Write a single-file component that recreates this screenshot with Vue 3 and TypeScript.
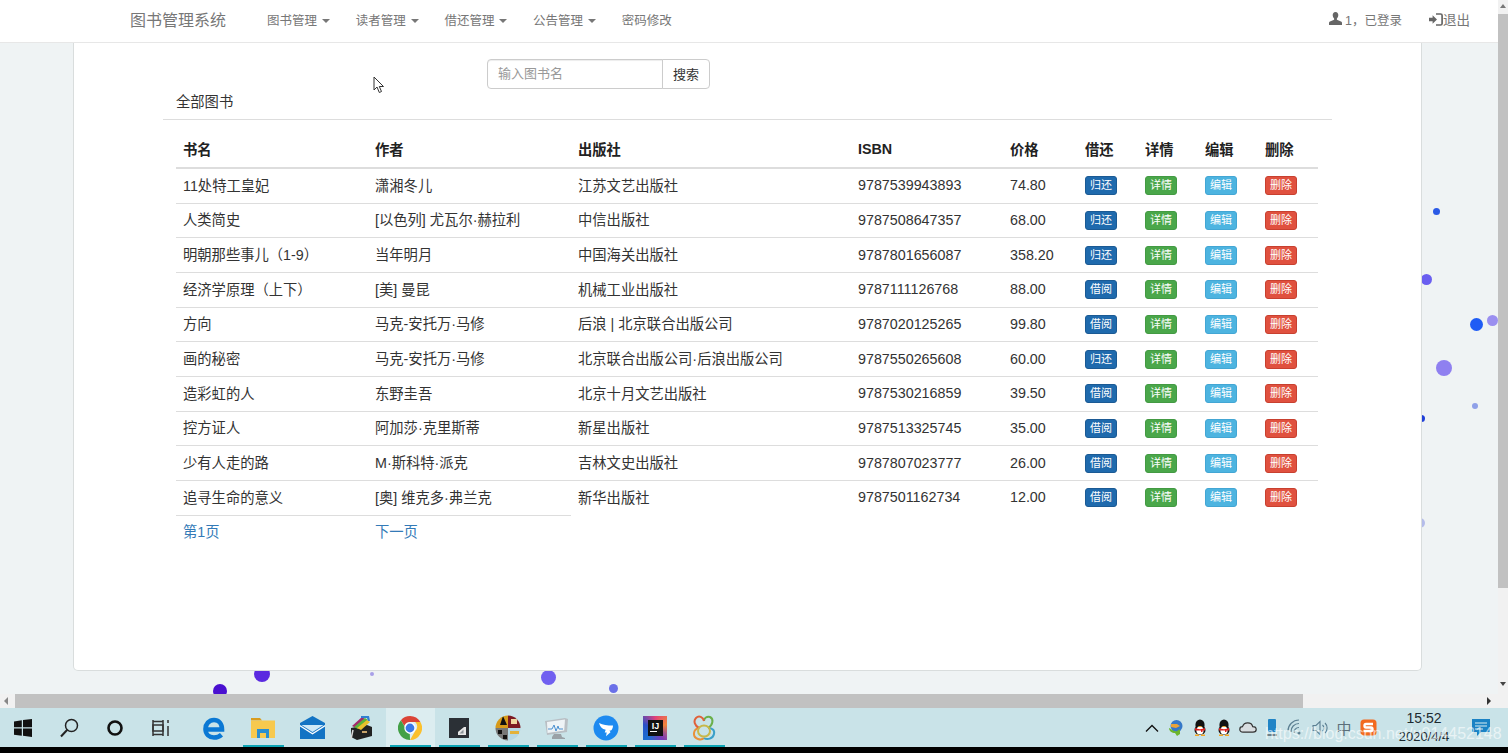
<template>
  <div class="screen">
    <div class="browser">
      <div class="viewport">
        <span
          v-for="(dot, i) in dots"
          :key="i"
          class="dot"
          :style="{ left: dot.x - dot.r + 'px', top: dot.y - dot.r + 'px', width: dot.r * 2 + 'px', height: dot.r * 2 + 'px', background: dot.c }"
        ></span>

        <header class="navbar">
          <a class="brand">图书管理系统</a>
          <ul class="nav">
            <li v-for="item in menus" :key="item">{{ item }}<i class="caret"></i></li>
            <li>密码修改</li>
          </ul>
          <div class="nav-right">
            <span class="nav-user">
              <svg width="13" height="13" viewBox="0 0 13 13"><path fill="#666" d="M6.500 0C4.600 0 3.700 1.400 3.700 3.100c0 1.400.6 2.700 1.400 3.400v1.200L1 9.400C.3 9.700 0 10.200 0 11v2h13v-2c0-.8-.3-1.300-1-1.600L7.900 7.700V6.500c.8-.7 1.400-2 1.400-3.400C9.300 1.400 8.400 0 6.500 0z"/></svg>
              1，已登录
            </span>
            <span class="nav-out">
              <svg width="14" height="13" viewBox="0 0 14 13"><path fill="#666" d="M0 4.800h3.600V2.300L8 6.500l-4.400 4.200V8.200H0z"/><path fill="none" stroke="#666" stroke-width="1.700" d="M7 1h4.500c1 0 1.600.6 1.600 1.600v7.800c0 1-.6 1.600-1.600 1.600H7"/></svg>
              退出
            </span>
          </div>
        </header>

        <main class="card">
          <form class="search" @submit.prevent>
            <input class="search-input" placeholder="输入图书名" />
            <button class="search-btn" type="button">搜索</button>
          </form>
          <div class="panel-title">全部图书</div>
          <table class="books">
            <colgroup>
              <col v-for="w in colWidths" :key="w.id" :style="{ width: w.px + 'px' }" />
            </colgroup>
            <thead>
              <tr>
                <th>书名</th><th>作者</th><th>出版社</th><th>ISBN</th><th>价格</th>
                <th>借还</th><th>详情</th><th>编辑</th><th>删除</th>
              </tr>
            </thead>
            <tbody>
              <tr v-for="b in books" :key="b.isbn">
                <td>{{ b.name }}</td>
                <td>{{ b.author }}</td>
                <td>{{ b.press }}</td>
                <td class="num">{{ b.isbn }}</td>
                <td class="num">{{ b.price }}</td>
                <td class="act"><button class="btn blue">{{ b.out ? '归还' : '借阅' }}</button></td>
                <td class="act"><button class="btn green">详情</button></td>
                <td class="act"><button class="btn teal">编辑</button></td>
                <td class="act"><button class="btn red">删除</button></td>
              </tr>
              <tr class="pager">
                <td><a>第1页</a></td>
                <td><a>下一页</a></td>
              </tr>
            </tbody>
          </table>
        </main>

        <svg class="cursor" width="12" height="18" viewBox="0 0 12 18"><path fill="#fff" stroke="#333" stroke-width="1" d="M1 1v13l3-3 2.300 5.500 2.200-1L6.300 10.500H10.500z"/></svg>
      </div>

      <div class="vscroll">
        <span class="arrow-up"></span>
        <div class="vthumb"></div>
        <span class="arrow-down"></span>
      </div>
    </div>

    <div class="hscroll">
      <span class="arrow-left"></span>
      <div class="hthumb"></div>
      <span class="arrow-right"></span>
    </div>

    <footer class="taskbar">
      <div class="cells-start">
        <div class="cell small">
          <svg width="22" height="22" viewBox="0 0 22 22"><path fill="#111" d="M2 4.500 9.800 3.300v7H2zM11 3.100 20 2v8.300h-9zM2 11.600h7.800v7.200L2 17.700zM11 11.600h9V20l-9-1.200z"/></svg>
        </div>
        <div class="cell small">
          <svg width="22" height="22" viewBox="0 0 22 22"><circle cx="13.500" cy="8.500" r="6" fill="none" stroke="#222" stroke-width="1.500"/><path stroke="#222" stroke-width="2" d="M9.300 12.800 3 19.500"/></svg>
        </div>
        <div class="cell small">
          <svg width="20" height="20" viewBox="0 0 20 20"><circle cx="10" cy="10" r="6.500" fill="none" stroke="#111" stroke-width="2.600"/></svg>
        </div>
        <div class="cell small">
          <svg width="20" height="18" viewBox="0 0 20 18"><g fill="none" stroke="#333" stroke-width="1.500"><path d="M2 1v16M12 1v16M2 2.500h10M2 15.500h10"/><rect x="2" y="6" width="10" height="6"/><path d="M17 1v3M17 7v10"/></g></svg>
        </div>
      </div>
      <div class="cells-apps">
        <div class="cell">
          <svg width="24" height="24" viewBox="0 0 24 24"><path fill="none" stroke="#0a78d4" stroke-width="4.600" d="M4 13.500h16C20 7.500 16.500 4 12 4 7 4 3.500 8 3.500 13c0 5.500 4 8.500 8.500 8.500 3 0 5.500-1 7.500-2.800"/></svg>
        </div>
        <div class="cell on">
          <svg width="24" height="22" viewBox="0 0 24 22"><path fill="#d99c1e" d="M0 1h9l2 2.500H0z"/><path fill="#f7c94e" d="M0 3.500h24V21H0z"/><path fill="#2a8fd0" d="M6 12h12v9h-3v-5H9v5H6z"/></svg>
        </div>
        <div class="cell">
          <svg width="25" height="23" viewBox="0 0 25 23"><path fill="#1273c4" d="M0 7 12.500 0 25 7v16H0z"/><path fill="#cfe9f7" d="M1.500 9h22L12.500 16z"/><path fill="#fff" d="M0 9l12.500 8L25 9v1.500L12.500 18.500 0 10.500z"/></svg>
        </div>
        <div class="cell">
          <svg width="24" height="26" viewBox="0 0 24 26"><path fill="#222" d="M2 13 18 10l5 2v9L8 25l-6-3z"/><path fill="#a52a6a" d="m3 11 10-9 3 2-9 9z"/><path fill="#5cb23a" d="m5 12 11-9 3 2-10 9z"/><path fill="#e8c02c" d="m8 13 10-8 3 2-9 8z"/><path fill="#2f7fd2" d="M12 1h8l1 5h-2l-1-3h-6z"/><path stroke="#ddd" stroke-width="1.500" d="M4 15 2 24"/><rect x="13" y="16" width="5" height="2" fill="#c9a36a"/></svg>
        </div>
        <div class="cell on active">
          <svg width="24" height="24" viewBox="0 0 24 24"><path fill="#db4437" d="M12 0a12 12 0 0 1 10.400 6H12a6 6 0 0 0-5.700 4L2.900 4.200A12 12 0 0 1 12 0z"/><path fill="#fbc02d" d="M22.400 6A12 12 0 0 1 12 24l5.200-9a6 6 0 0 0 0-9z"/><path fill="#43a047" d="M2.900 4.200 8 13a5.900 5.900 0 0 0 4 5l-.2.100L12 24A12 12 0 0 1 2.900 4.200z"/><circle cx="12" cy="12" r="5.700" fill="#fff"/><circle cx="12" cy="12" r="4.400" fill="#3b78e7"/></svg>
        </div>
        <div class="cell on">
          <svg width="20" height="20" viewBox="0 0 20 20"><rect width="20" height="20" fill="#2b3036"/><path fill="#e6e6e6" d="M9 17V14h-.1L15 9h2v8z"/><path fill="#8d9399" d="m10.500 15.500 4-4v4z"/></svg>
        </div>
        <div class="cell on">
          <svg width="26" height="26" viewBox="0 0 26 26"><clipPath id="round"><circle cx="13" cy="13" r="12.500"/></clipPath><g clip-path="url(#round)"><rect width="13" height="13" fill="#d79a1a"/><rect x="13" width="13" height="13" fill="#7d1a22"/><rect y="13" width="13" height="13" fill="#777"/><rect x="13" y="13" width="13" height="13" fill="#b6d8e4"/><path fill="#111" d="M8 1l4 9H5zM3 15h4v4H3zM8 20h4v4H8z"/><path fill="#f1d7a0" d="M16 4h6v5h-6z"/><path fill="#e3b23a" d="M15 16h9v3h-9z"/></g></svg>
        </div>
        <div class="cell on">
          <svg width="26" height="24" viewBox="0 0 26 24"><path fill="#b9bfc4" d="M1 5 21 2l3 1-1 13-20 3z"/><path fill="#eef3f6" d="M3 6 21 3.500l-.8 11L3.500 17z"/><path fill="none" stroke="#4a8fd0" stroke-width="1" d="M4 13h4l2-4 2 6 2-5 1 3h4"/><path fill="#9aa1a6" d="M10 18h7l1 3 3 1v1H8v-2z"/></svg>
        </div>
        <div class="cell on">
          <svg width="26" height="26" viewBox="0 0 26 26"><circle cx="13" cy="13" r="12.500" fill="#1d8af0"/><path fill="#fff" d="M6 8c4 2 8 2.500 14 2.500 0 2.500-1 4-2 5l-1.500.1 1 1.600-4.500 4 .7-3.700h-2l1-2.700C9 14 7 11.500 6 8z"/></svg>
        </div>
        <div class="cell on">
          <div class="idea"><span>IJ</span><i></i></div>
        </div>
        <div class="cell on">
          <svg width="24" height="26" viewBox="0 0 24 26"><g fill="none" stroke-width="2"><path stroke="#e8913a" d="M7 13C1 14 0 22 6 24c3 1 5 0 6-1"/><path stroke="#3aa0c8" d="M12 23c3 2 9 1 10-4 1-4-2-6-6-6"/><path stroke="#6ab04a" d="M16 13c5-3 6-9 2-11-3-1-6 1-6 4"/><path stroke="#e0613a" d="M12 6C11 2 7 0 4 3 1 6 3 11 7 13"/><ellipse stroke="#c8b84a" cx="12" cy="16" rx="6" ry="5.500"/></g></svg>
        </div>
      </div>

      <div class="tray">
        <div class="tray-cell">
          <svg width="14" height="8" viewBox="0 0 14 8"><path fill="none" stroke="#111" stroke-width="1.300" d="m1 7.500 6-6 6 6"/></svg>
        </div>
        <div class="tray-cell">
          <svg width="17" height="17" viewBox="0 0 17 17"><circle cx="8.500" cy="7" r="6" fill="#3578c8"/><path fill="#e8a33a" d="M3 5h6l3 2-4 2-5-1z"/><path fill="#6cb52d" d="M1 9c3 1 4 4 8 3l3-2v5L9 17l-2-3C4 14 1 12 1 9z"/></svg>
        </div>
        <div class="tray-cell" v-for="n in 2" :key="n">
          <svg width="14" height="17" viewBox="0 0 14 17"><ellipse cx="7" cy="6" rx="4.600" ry="5.500" fill="#111"/><ellipse cx="7" cy="11" rx="5.500" ry="5" fill="#111"/><ellipse cx="7" cy="11.500" rx="3.600" ry="4" fill="#fff"/><path fill="#e02020" d="M2 9c3 1.500 7 1.500 10 0v2.500H9.500V13H8v-1.500H2z"/><path fill="#f5a623" d="M4.500 7h5L7 8.300zM2 15.500h4v1.500H2zM8 15.500h4v1.500H8z"/></svg>
        </div>
        <div class="tray-cell">
          <svg width="18" height="11" viewBox="0 0 18 11"><path fill="#d8dde0" stroke="#333" stroke-width="1.200" d="M4 10.200C2 10.200 .8 9 .8 7.400s1.200-2.700 2.700-2.700C4.200 2.300 6.200 .8 8.700 .8c2.700 0 4.600 1.700 5 3.900 2.100 0 3.500 1.200 3.500 2.800s-1.300 2.700-3.200 2.700z"/></svg>
        </div>
        <div class="tray-cell">
          <svg width="10" height="18" viewBox="0 0 10 18"><rect x="1" width="8" height="13" rx="1" fill="#1f84c6"/><rect y="15" width="10" height="2" fill="#6a7f8a"/></svg>
        </div>
        <div class="tray-cell">
          <svg width="18" height="17" viewBox="0 0 18 17"><g fill="none" stroke="#5b7f92" stroke-width="1.200"><path d="M1 12a11 11 0 0 1 11-11"/><path d="M4 13a8 8 0 0 1 8-8.500"/><path d="M7 14a5 5 0 0 1 5-5.500"/></g><circle cx="12" cy="14" r="1.500" fill="#5b7f92"/></svg>
        </div>
        <div class="tray-cell">
          <svg width="16" height="16" viewBox="0 0 16 16"><g fill="none" stroke="#5b7f92" stroke-width="1.100"><path d="M1 5.500h3l4-4v13l-4-4H1z"/><path d="M10.500 5a4 4 0 0 1 0 6"/><path d="M13 3a7 7 0 0 1 0 10"/></g></svg>
        </div>
        <div class="tray-cell ime">中</div>
        <div class="tray-cell">
          <svg width="17" height="17" viewBox="0 0 17 17"><rect x=".5" y=".5" width="16" height="16" rx="3.500" fill="#f26a1f"/><path fill="none" stroke="#fff" stroke-width="2.400" d="M13 5H6C4 5 4 8.500 6 8.500h5c2 0 2 3.500 0 3.500H3.500"/></svg>
        </div>
        <div class="clock">
          <span class="clock-time">15:52</span>
          <span class="clock-date">2020/4/4</span>
        </div>
        <div class="notify">
          <svg width="18" height="17" viewBox="0 0 18 17"><path fill="#1a82c4" d="M0 0h18v13H9l-4 4v-4H0z"/><path stroke="#d8edf2" stroke-width="1.200" d="M3 4h12M3 7h12M3 10h8"/></svg>
        </div>
      </div>
      <span class="watermark">https://blog.csdn.net/u014452148</span>
    </footer>
    <div class="blackbar"></div>
  </div>
</template>

<script setup lang="ts">
interface Book {
  name: string
  author: string
  press: string
  isbn: string
  price: string
  out: boolean
}

const menus = ['图书管理', '读者管理', '借还管理', '公告管理']

const colWidths = [192, 203, 280, 152, 75, 60, 60, 60, 60].map((px, id) => ({ id, px }))

const books: Book[] = [
  { name: '11处特工皇妃', author: '潇湘冬儿', press: '江苏文艺出版社', isbn: '9787539943893', price: '74.80', out: true },
  { name: '人类简史', author: '[以色列] 尤瓦尔·赫拉利', press: '中信出版社', isbn: '9787508647357', price: '68.00', out: true },
  { name: '明朝那些事儿（1-9）', author: '当年明月', press: '中国海关出版社', isbn: '9787801656087', price: '358.20', out: true },
  { name: '经济学原理（上下）', author: '[美] 曼昆', press: '机械工业出版社', isbn: '9787111126768', price: '88.00', out: false },
  { name: '方向', author: '马克-安托万·马修', press: '后浪 | 北京联合出版公司', isbn: '9787020125265', price: '99.80', out: false },
  { name: '画的秘密', author: '马克-安托万·马修', press: '北京联合出版公司·后浪出版公司', isbn: '9787550265608', price: '60.00', out: true },
  { name: '造彩虹的人', author: '东野圭吾', press: '北京十月文艺出版社', isbn: '9787530216859', price: '39.50', out: false },
  { name: '控方证人', author: '阿加莎·克里斯蒂', press: '新星出版社', isbn: '9787513325745', price: '35.00', out: false },
  { name: '少有人走的路', author: 'M·斯科特·派克', press: '吉林文史出版社', isbn: '9787807023777', price: '26.00', out: false },
  { name: '追寻生命的意义', author: '[奥] 维克多·弗兰克', press: '新华出版社', isbn: '9787501162734', price: '12.00', out: false }
]

// floating background particles, page coordinates
const dots = [
  { x: 1436, y: 211, r: 3.5, c: '#2a5ae6' },
  { x: 1426, y: 279, r: 5.5, c: '#6a5ff0' },
  { x: 1476, y: 324, r: 6.5, c: '#1f5cf5' },
  { x: 1492, y: 320, r: 5.5, c: '#9a8ff0' },
  { x: 1444, y: 368, r: 8, c: '#8f80f0' },
  { x: 1475, y: 406, r: 3, c: '#8fa0e8' },
  { x: 1421, y: 418, r: 3.5, c: '#2040d8' },
  { x: 1420, y: 523, r: 5, c: '#b4bcea' },
  { x: 262, y: 674, r: 8, c: '#5a2ae0' },
  { x: 220, y: 691, r: 7, c: '#4a10d0' },
  { x: 372, y: 674, r: 2, c: '#a8a0e8' },
  { x: 548, y: 677, r: 7.5, c: '#7060f0' },
  { x: 613, y: 688, r: 4.5, c: '#6a70e8' }
]
</script>

<style>
html,
body {
  margin: 0;
  overflow: hidden;
}
</style>

<style scoped>
.screen {
  width: 1508px;
  height: 753px;
  display: flex;
  flex-direction: column;
  overflow: hidden;
  font-family: "Liberation Sans", "Noto Sans CJK SC", sans-serif;
  color: #333;
}

.browser {
  height: 694px;
  display: flex;
  flex: none;
}

.viewport {
  position: relative;
  flex: 1;
  min-width: 0;
  background: #eff3f4;
  overflow: hidden;
}

.dot {
  position: absolute;
  border-radius: 50%;
}

.navbar {
  position: relative;
  height: 38px;
  padding: 0 0 4px 130px;
  display: flex;
  align-items: center;
  background: #fff;
  border-bottom: 1px solid #e7e7e7;
  color: #777;
}

.brand {
  font-size: 16px;
  width: 137px;
}

.nav {
  display: flex;
  list-style: none;
  margin: 0;
  padding: 0;
  font-size: 12.500px;
}

.nav li {
  width: 88.700px;
}

.caret {
  display: inline-block;
  margin-left: 5px;
  vertical-align: middle;
  border-top: 4px solid #777;
  border-left: 4px solid transparent;
  border-right: 4px solid transparent;
}

.nav-right {
  margin-left: auto;
  display: flex;
  align-items: center;
  font-size: 12.500px;
  padding-right: 28px;
}

.nav-user {
  margin-right: 27px;
}

.nav-out {
  display: flex;
  align-items: center;
  font-size: 13.500px;
}

.card {
  position: relative;
  width: 1347px;
  height: 627px;
  margin-left: 73px;
  background: #fff;
  border: 1px solid #d9dddd;
  border-top: 0;
  border-radius: 0 0 5px 5px;
}

.search {
  display: flex;
  height: 30px;
  padding: 16px 0 0 413px;
}

.search-input {
  width: 176px;
  height: 30px;
  box-sizing: border-box;
  padding: 0 10px 2px;
  border: 1px solid #ccc;
  border-radius: 4px 0 0 4px;
  font: 13px "Liberation Sans", "Noto Sans CJK SC", sans-serif;
  outline: none;
  box-shadow: inset 0 1px 1px rgba(0, 0, 0, .075);
}

.search-input::placeholder {
  color: #999;
}

.search-btn {
  width: 48px;
  height: 30px;
  padding: 0 0 2px;
  margin-left: -1px;
  background: #fff;
  border: 1px solid #ccc;
  border-radius: 0 4px 4px 0;
  font: 13px "Liberation Sans", "Noto Sans CJK SC", sans-serif;
  color: #333;
}

.panel-title {
  margin: 0 89px 0 89px;
  padding: 4px 0 8px 13px;
  height: 18px;
  line-height: 18px;
  font-size: 14.300px;
  border-bottom: 1px solid #ddd;
}

.books {
  margin: 12px 0 0 102px;
  width: 1142px;
  table-layout: fixed;
  border-collapse: separate;
  border-spacing: 0;
  font-size: 14.300px;
}

.books th {
  height: 33px;
  padding: 0 7px 2px;
  text-align: left;
  font-weight: 700;
  color: #222;
  border-bottom: 2px solid #ddd;
}

.books td {
  height: 34.670px;
  box-sizing: border-box;
  padding: 0 7px 3px;
  border-top: 1px solid #ddd;
  white-space: nowrap;
}

.books td.num {
  padding-bottom: 1px;
}

.books td.act {
  padding-bottom: 0;
}

.books tbody tr:first-child td {
  height: 33.670px;
  border-top: 0;
}

.pager a {
  color: #337ab7;
}

.btn {
  display: block;
  width: 32px;
  height: 19px;
  padding: 0;
  border: 1px solid;
  border-radius: 3px;
  color: #fff;
  font: 11px/17px "Liberation Sans", "Noto Sans CJK SC", sans-serif;
}

.blue { background: #1f6aad; border-color: #1b5a94; }
.green { background: #4aa74a; border-color: #439a43; }
.teal { background: #4db4e0; border-color: #43a6d4; }
.red { background: #e0513f; border-color: #c8402f; }

.cursor {
  position: absolute;
  left: 373px;
  top: 76px;
}

.vscroll {
  position: relative;
  width: 10px;
  background: #f1f1f1;
}

.vthumb {
  position: absolute;
  top: 14px;
  left: 0;
  right: 0;
  height: 574px;
  background: #c1c1c1;
}

.arrow-up,
.arrow-down {
  position: absolute;
  left: 2px;
  border-left: 3.500px solid transparent;
  border-right: 3.500px solid transparent;
}

.arrow-up {
  top: 4px;
  border-bottom: 4px solid #777;
}

.arrow-down {
  bottom: 8px;
  border-top: 4px solid #444;
}

.hscroll {
  position: relative;
  height: 14px;
  flex: none;
  background: #f1f1f1;
}

.hthumb {
  position: absolute;
  left: 15px;
  top: 0;
  width: 1288px;
  height: 14px;
  background: #c1c1c1;
}

.arrow-left,
.arrow-right {
  position: absolute;
  top: 3px;
  border-top: 4px solid transparent;
  border-bottom: 4px solid transparent;
}

.arrow-left {
  left: 4px;
  border-right: 4px solid #888;
}

.arrow-right {
  right: 17px;
  border-left: 4px solid #333;
}

.taskbar {
  position: relative;
  height: 39px;
  flex: none;
  display: flex;
  background: #c9e3e8;
}

.cells-start {
  display: flex;
  width: 189.500px;
}

.cell {
  position: relative;
  display: flex;
  align-items: center;
  justify-content: center;
  width: 49px;
  height: 39px;
  flex: none;
}

.cell.small {
  width: 46.700px;
  margin-left: -0.500px;
}

.cells-apps {
  display: flex;
}

.cell.on::after {
  content: "";
  position: absolute;
  left: 4px;
  right: 4px;
  bottom: 0;
  height: 2px;
  background: #0da5b5;
}

.cell.active {
  background: #dcedf0;
}

.idea {
  position: relative;
  width: 24px;
  height: 24px;
  background: conic-gradient(#e0407a, #f0863a, #7a3ab8, #1a6fd0, #2a50c8, #e0407a);
}

.idea span {
  position: absolute;
  left: 5px;
  top: 4px;
  width: 15px;
  height: 16px;
  background: #111;
  color: #fff;
  font: 700 9px/12px "Liberation Sans", sans-serif;
  text-align: center;
}

.idea i {
  position: absolute;
  left: 7px;
  top: 15px;
  width: 7px;
  height: 1.500px;
  background: #fff;
}

.tray {
  position: absolute;
  left: 1140px;
  right: 0;
  top: 0;
  bottom: 0;
  display: flex;
  align-items: center;
}

.tray-cell {
  width: 24px;
  display: flex;
  justify-content: center;
  align-items: center;
  flex: none;
}

.ime {
  color: #5b6f7a;
  font-size: 15px;
}

.clock {
  width: 88px;
  display: flex;
  flex-direction: column;
  align-items: center;
  color: #1c2a30;
  flex: none;
}

.clock-time {
  font-size: 14px;
  line-height: 18px;
}

.clock-date {
  font-size: 13px;
  line-height: 19px;
}

.notify {
  width: 26px;
  display: flex;
  justify-content: center;
}

.watermark {
  position: absolute;
  left: 1265px;
  top: 17px;
  font-size: 16px;
  color: rgba(255, 255, 255, .6);
  white-space: nowrap;
}

.blackbar {
  flex: 1;
  background: #000;
}
</style>
